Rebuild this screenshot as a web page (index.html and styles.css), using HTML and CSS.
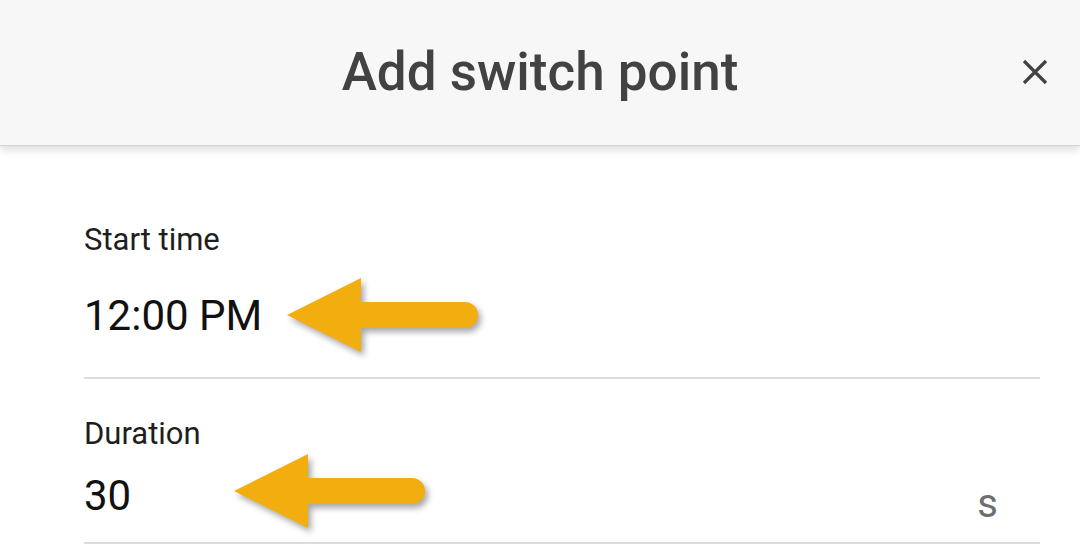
FILE: index.html
```html
<!DOCTYPE html>
<html lang="en">
<head>
<meta charset="utf-8">
<title>Add switch point</title>
<link rel="stylesheet" href="styles.css">
</head>
<body>
<header class="top-bar">
  <h1 class="title">Add switch point</h1>
  <button class="close" aria-label="Close">
    <svg width="26" height="26" viewBox="0 0 26 26"><path d="M2 2 L24 24 M24 2 L2 24" stroke="#424242" stroke-width="3.2" fill="none"/></svg>
  </button>
</header>
<main class="form">
  <div class="field">
    <div class="label">Start time</div>
    <div class="value-row"><span class="value">12:00 PM</span></div>
  </div>
  <div class="field">
    <div class="label">Duration</div>
    <div class="value-row"><span class="value">30</span><span class="unit">s</span></div>
  </div>
  <svg class="arrow arrow-one" width="210" height="90" viewBox="0 0 210 90"><path d="M4 38 L78 1 L78 25 L182 25 A13 13 0 0 1 182 51 L78 51 L78 75 Z"/></svg>
  <svg class="arrow arrow-two" width="210" height="90" viewBox="0 0 210 90"><path d="M4 38 L78 1 L78 25 L182 25 A13 13 0 0 1 182 51 L78 51 L78 75 Z"/></svg>
</main>
</body>
</html>
```
FILE: styles.css
```css
* { box-sizing: border-box; }
html, body { margin: 0; padding: 0; background: #fff; }
body {
  font-family: Roboto, "Liberation Sans", sans-serif;
  width: 1080px;
  height: 560px;
  overflow: hidden;
}
.top-bar {
  position: relative;
  height: 146px;
  background: #f7f7f7;
  display: flex;
  align-items: center;
  justify-content: center;
  border-bottom: 1px solid #d6d6d6;
  box-shadow: 0 3px 9px rgba(0, 0, 0, 0.16);
  z-index: 1;
}
.title {
  margin: 0;
  font-size: 53px;
  font-weight: 500;
  color: #424242;
  line-height: 1;
}
.close {
  position: absolute;
  right: 32px;
  top: 59px;
  width: 26px;
  height: 26px;
  padding: 0;
  border: 0;
  background: transparent;
  display: flex;
}
.form {
  position: relative;
  padding: 0 40px 0 84px;
}
.field {
  border-bottom: 2px solid #dcdcdc;
}
.field:first-child { padding-top: 77px; }
.field + .field { padding-top: 38px; }
.label {
  font-size: 31px;
  line-height: 34px;
  color: #1e1e1e;
}
.value-row {
  display: flex;
  align-items: flex-end;
  justify-content: space-between;
  padding-top: 34px;
  padding-bottom: 36px;
}
.field + .field .value-row { padding-top: 20px; padding-bottom: 21px; }
.value {
  font-size: 42px;
  line-height: 50px;
  color: #111;
}
.unit {
  font-size: 40px;
  line-height: 34px;
  color: #6e6e6e;
  margin-right: 42px;
}
.arrow {
  position: absolute;
  fill: #f2ae0e;
  filter: drop-shadow(3px 4px 3px rgba(0, 0, 0, 0.35));
}
.arrow-one { left: 283px; top: 131px; }
.arrow-two { left: 230px; top: 307px; }
```
